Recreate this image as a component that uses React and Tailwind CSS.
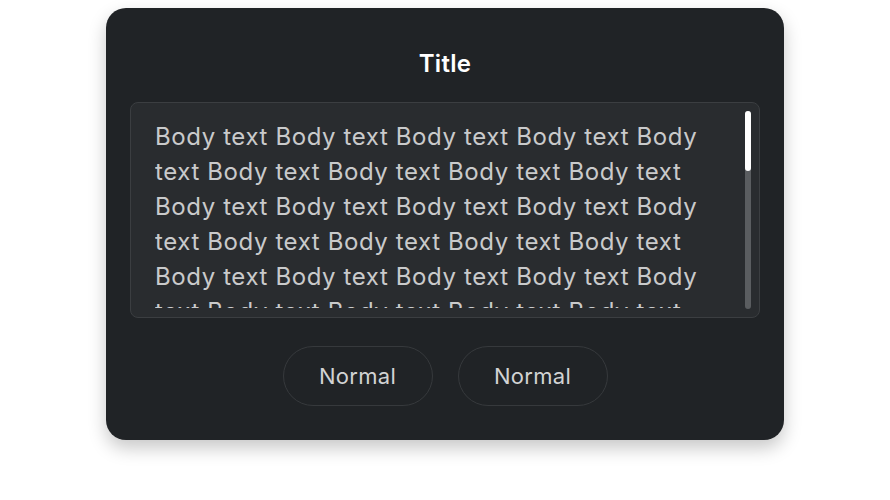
import React from "react";

const BODY = Array(30).fill("Body text").join(" ");

const App = () => {
  return (
    <div className="w-[890px] h-[500px] bg-white flex justify-center pt-2" style={{ fontFamily: "Inter, 'Noto Sans', sans-serif" }}>
      <div className="w-[678px] h-[432px] bg-[#202326] rounded-[20px] shadow-[0_8px_18px_rgba(0,0,0,0.22)] px-6 pt-10 flex flex-col">
        <h1 className="h-8 leading-8 text-center text-white text-[24px] font-semibold tracking-[0.3px]">Title</h1>

        <div className="relative mt-[22px] h-[216px] bg-[#292c2f] border border-[#3b3e41] rounded-lg pl-6 pr-12 pt-4 pb-[9px]">
          <div className="h-full overflow-hidden text-[24px] leading-[35px] tracking-[0.6px] text-[#c9cacb]">
            {BODY}
          </div>
          {/* scrollbar */}
          <div className="absolute right-2 top-2 bottom-2 w-[6px] rounded-full bg-[#5a5d60]">
            <div className="h-[60px] w-full rounded-full bg-white" />
          </div>
        </div>

        <div className="mt-7 flex justify-center gap-[25px]">
          <button className="w-[150px] h-[60px] rounded-full border border-[#36393c] text-[22px] tracking-[0.3px] text-[#d2d3d4]">Normal</button>
          <button className="w-[150px] h-[60px] rounded-full border border-[#36393c] text-[22px] tracking-[0.3px] text-[#d2d3d4]">Normal</button>
        </div>
      </div>
    </div>
  );
};

export default App;
